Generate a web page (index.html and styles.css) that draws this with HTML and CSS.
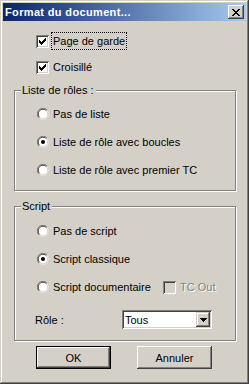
FILE: index.html
```html
<!DOCTYPE html>
<html>
<head>
  <meta charset="utf-8">
  <link rel="stylesheet" href="styles.css">
</head>
<body>
  <div class="window">
    <div class="titlebar">
      <span class="title">Format du document...</span>
      <span class="close">
        <svg width="8" height="7" viewBox="0 0 8 7" shape-rendering="crispEdges"><path d="M0 0h2v1h-2zM6 0h2v1h-2zM1 1h2v1h-2zM5 1h2v1h-2zM2 2h4v1h-4zM3 3h2v1h-2zM2 4h4v1h-4zM1 5h2v1h-2zM5 5h2v1h-2zM0 6h2v1h-2zM6 6h2v1h-2z" fill="#000"/></svg>
      </span>
    </div>

    <div class="content">
      <div class="checks">
        <div class="row">
          <span class="check on"></span>
          <span class="label focus">Page de garde</span>
        </div>
        <div class="row">
          <span class="check on"></span>
          <span class="label">Croisillé</span>
        </div>
      </div>

      <div class="group list">
        <span class="legend">Liste de rôles :</span>
        <div class="row"><span class="radio"></span><span class="label">Pas de liste</span></div>
        <div class="row"><span class="radio on"></span><span class="label">Liste de rôle avec boucles</span></div>
        <div class="row"><span class="radio"></span><span class="label">Liste de rôle avec premier TC</span></div>
      </div>

      <div class="group script">
        <span class="legend">Script</span>
        <div class="row"><span class="radio"></span><span class="label">Pas de script</span></div>
        <div class="row"><span class="radio on"></span><span class="label">Script classique</span></div>
        <div class="row">
          <span class="radio"></span><span class="label wide">Script documentaire</span>
          <span class="check off"></span><span class="label disabled">TC Out</span>
        </div>
        <div class="role">
          <span class="role-label">Rôle :</span>
          <div class="select">
            <span class="value">Tous</span>
            <span class="drop">
              <svg width="7" height="4" viewBox="0 0 7 4" shape-rendering="crispEdges"><path d="M0 0h7v1h-7zM1 1h5v1h-5zM2 2h3v1h-3zM3 3h1v1h-1z" fill="#000"/></svg>
            </span>
          </div>
        </div>
      </div>

      <div class="buttons">
        <button class="btn default">OK</button>
        <button class="btn">Annuler</button>
      </div>
    </div>
  </div>
</body>
</html>
```

FILE: styles.css
```css
html, body {
  margin: 0;
  padding: 0;
  background: #d4d0c8;
}
body {
  font-family: "Liberation Sans", Arial, sans-serif;
  font-size: 11px;
  color: #000;
}

.window {
  width: 249px;
  height: 384px;
  box-sizing: border-box;
  padding: 3px;
  background: #d4d0c8;
  box-shadow: inset -1px -1px #404040, inset 1px 1px #d4d0c8,
              inset -2px -2px #808080, inset 2px 2px #fff;
}

.titlebar {
  height: 18px;
  display: flex;
  align-items: center;
  justify-content: space-between;
  padding: 0 2px 0 2px;
  background: linear-gradient(to right, #0a246a, #a6caf0);
}
.title {
  color: #fff;
  font-weight: bold;
  font-size: 11px;
  letter-spacing: 0.35px;
}
.close {
  width: 16px;
  height: 14px;
  box-sizing: border-box;
  display: flex;
  align-items: center;
  justify-content: center;
  background: #d4d0c8;
  box-shadow: inset -1px -1px #404040, inset 1px 1px #fff,
              inset -2px -2px #808080;
}

.content {
  padding: 12px 0 0 0;
}

.checks {
  display: flex;
  flex-direction: column;
  gap: 10px;
  padding-left: 33px;
}

.row {
  display: flex;
  align-items: center;
  height: 16px;
}

.label {
  margin-left: 4px;
  line-height: 16px;
  white-space: nowrap;
}
.label.focus {
  outline: 1px dotted #000;
  padding: 0 1px;
  margin-left: 3px;
}
.label.wide {
  width: 110px;
}
.label.disabled {
  color: #808080;
  text-shadow: 1px 1px #fff;
}

.check {
  width: 13px;
  height: 13px;
  flex: none;
  box-sizing: border-box;
  background: #fff;
  box-shadow: inset 1px 1px #808080, inset -1px -1px #fff,
              inset 2px 2px #404040, inset -2px -2px #d4d0c8;
}
.check.on {
  background: #fff url("data:image/svg+xml,%3Csvg xmlns='http://www.w3.org/2000/svg' width='7' height='7' shape-rendering='crispEdges'%3E%3Cpath d='M6 0h1v3h-1zM5 1h1v3h-1zM4 2h1v3h-1zM3 3h1v3h-1zM2 4h1v3h-1zM1 3h1v3h-1zM0 2h1v3h-1z' fill='%23000'/%3E%3C/svg%3E") no-repeat 3px 3px;
}
.check.off {
  background: #d4d0c8;
}

.radio {
  width: 12px;
  height: 12px;
  flex: none;
  background: url("data:image/svg+xml,%3Csvg xmlns='http://www.w3.org/2000/svg' width='12' height='12'%3E%3Ccircle cx='6' cy='6' r='5.5' fill='%23fff'/%3E%3Cpath d='M1.9 10.1A5.5 5.5 0 0 1 10.1 1.9' stroke='%23808080' fill='none'/%3E%3Cpath d='M2.6 9.4A4.5 4.5 0 0 1 9.4 2.6' stroke='%23404040' fill='none'/%3E%3Cpath d='M9.4 2.6A4.5 4.5 0 0 1 2.6 9.4' stroke='%23d4d0c8' fill='none'/%3E%3C/svg%3E") no-repeat;
}
.radio.on {
  background: url("data:image/svg+xml,%3Csvg xmlns='http://www.w3.org/2000/svg' width='12' height='12'%3E%3Ccircle cx='6' cy='6' r='5.5' fill='%23fff'/%3E%3Cpath d='M1.9 10.1A5.5 5.5 0 0 1 10.1 1.9' stroke='%23808080' fill='none'/%3E%3Cpath d='M2.6 9.4A4.5 4.5 0 0 1 9.4 2.6' stroke='%23404040' fill='none'/%3E%3Cpath d='M9.4 2.6A4.5 4.5 0 0 1 2.6 9.4' stroke='%23d4d0c8' fill='none'/%3E%3Ccircle cx='6' cy='6' r='2' fill='%23000'/%3E%3C/svg%3E") no-repeat;
}

.group {
  position: relative;
  margin: 15px 0 0 11px;
  width: 222px;
  box-sizing: border-box;
  border: 1px solid #808080;
  box-shadow: inset 1px 1px #fff, 1px 1px #fff;
  display: flex;
  flex-direction: column;
  gap: 12px;
  padding: 15px 0 12px 22px;
}
.group.script {
  padding: 16px 0 11px 22px;
}
.legend {
  position: absolute;
  top: -7px;
  left: 6px;
  padding: 0 2px 0 1px;
  background: #d4d0c8;
  line-height: 13px;
}

.role {
  display: flex;
  align-items: center;
  margin: 3px 0 0 -2px;
  height: 19px;
}
.role-label {
  width: 87px;
}
.select {
  width: 90px;
  height: 19px;
  box-sizing: border-box;
  background: #fff;
  display: flex;
  align-items: center;
  justify-content: space-between;
  padding: 2px;
  box-shadow: inset 1px 1px #808080, inset -1px -1px #fff,
              inset 2px 2px #404040, inset -2px -2px #d4d0c8;
}
.value {
  padding-left: 1px;
}
.drop {
  width: 14px;
  height: 15px;
  box-sizing: border-box;
  display: flex;
  align-items: center;
  justify-content: center;
  background: #d4d0c8;
  box-shadow: inset -1px -1px #404040, inset 1px 1px #d4d0c8,
              inset -2px -2px #808080, inset 2px 2px #fff;
}

.buttons {
  display: flex;
  gap: 26px;
  padding: 5px 0 0 33px;
}
.btn {
  width: 75px;
  height: 23px;
  margin: 0;
  padding: 0;
  border: none;
  font: inherit;
  color: #000;
  background: #d4d0c8;
  box-shadow: inset -1px -1px #404040, inset 1px 1px #fff,
              inset -2px -2px #808080, inset 2px 2px #d4d0c8;
}
.btn.default {
  box-shadow: inset 0 0 0 1px #000, inset -2px -2px #404040, inset 2px 2px #fff,
              inset -3px -3px #808080;
}
```
